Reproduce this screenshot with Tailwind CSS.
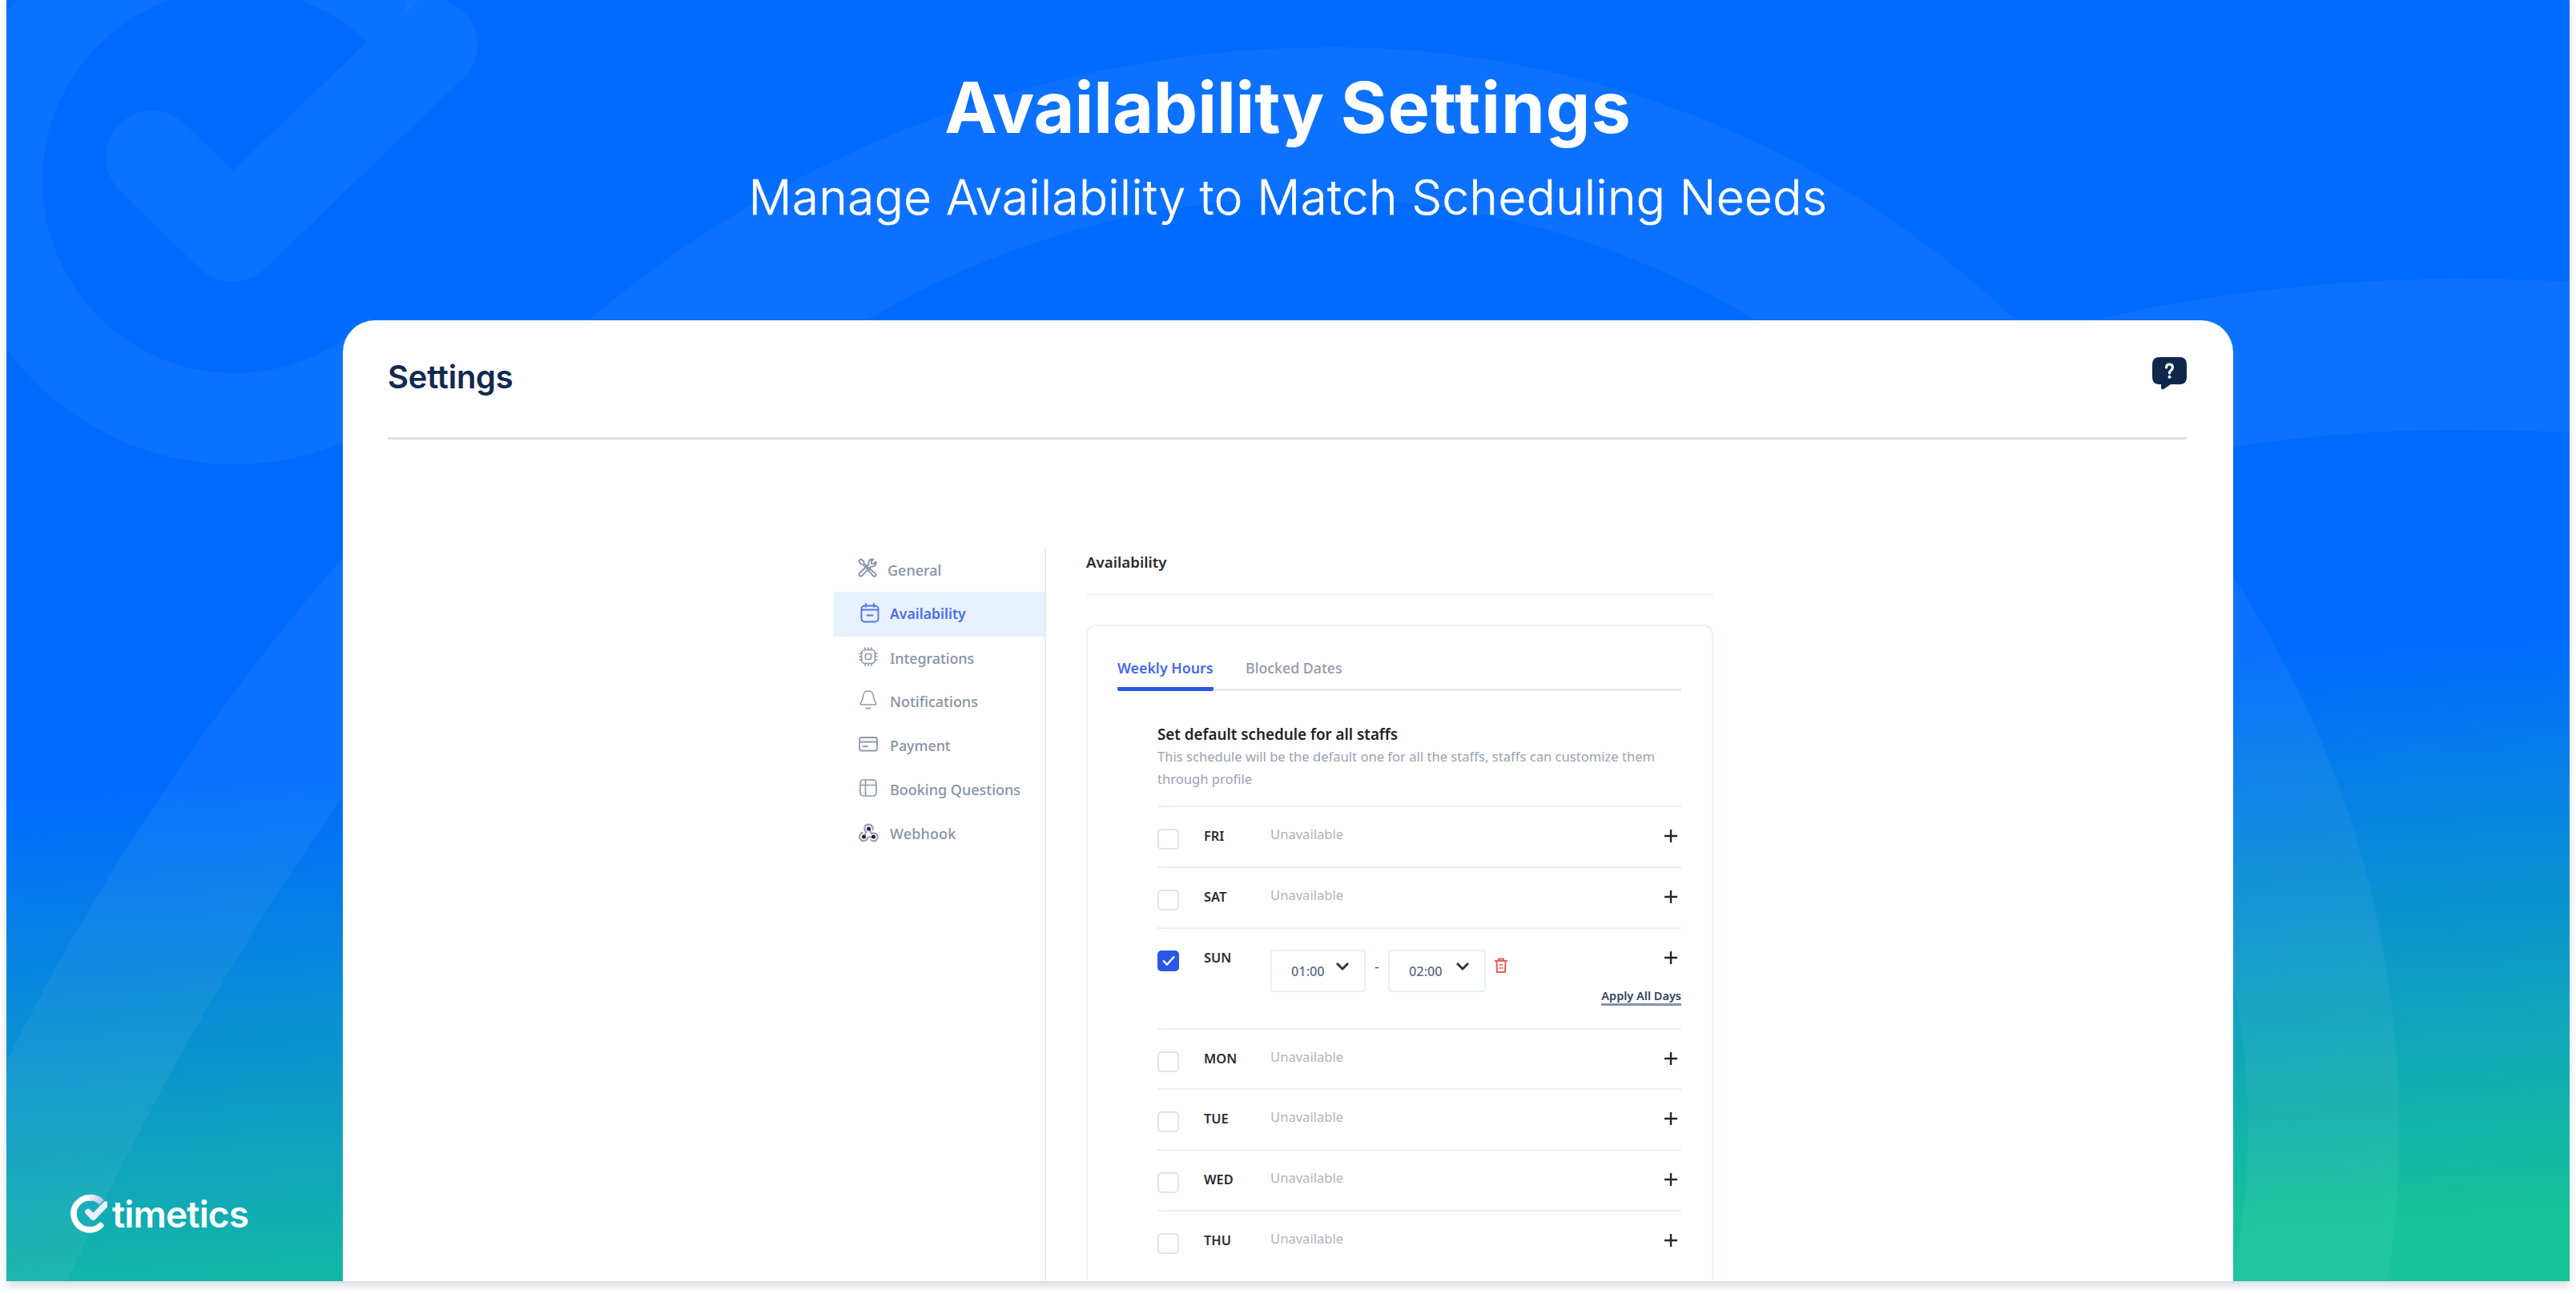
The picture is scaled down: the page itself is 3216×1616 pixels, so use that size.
<!DOCTYPE html>
<html lang="en">
<head>
    <meta charset="UTF-8">
    <meta name="viewport" content="width=device-width, initial-scale=1.0">
    <title>Timetics - Availability Settings</title>
    <script src="https://cdn.jsdelivr.net/npm/@tailwindcss/browser@4"></script>
</head>
<body class="bg-white h-[1616px] overflow-hidden">
    <main class="relative mx-2 w-[3200px] h-[1600px] bg-[linear-gradient(176.4deg,#006bff_55%,#17c398_95.5%)] shadow-[0_6px_10px_#d8dce3] font-['Inter',sans-serif]">

        <!-- Background shapes -->
        <svg class="absolute inset-0" width="3200" height="1600" viewBox="8 0 3200 1600" fill="none">
            <g opacity="0.045">
                <path d="M503 16A297 297 0 1 0 503 436" stroke="#fff" stroke-width="114" />
                <path d="M190 196L290 294L538 56" stroke="#fff" stroke-width="116" stroke-linecap="round" stroke-linejoin="round" />
            </g>
            <path d="M511 0H525L500 20Z" fill="#fff" fill-opacity="0.04" />
            <path d="M8 1326A3000 3000 0 0 1 428 696L735 400A1430 1430 0 0 1 1662 59A1242 1242 0 0 1 2517 400L2788 720A1250 1250 0 0 1 2981 1600L2786 1600A920 920 0 0 0 2788 1226L2193 400A1083 1083 0 0 0 1082 400L428 995A3600 3600 0 0 0 84 1600L8 1600Z" fill="#fff" fill-opacity="0.046" />
            <path d="M2610 400A2096 2096 0 0 1 3074 348Q3142 348 3208 352V540Q3140 537 3065 537A1870 1870 0 0 0 2788 558L2610 600Z" fill="#fff" fill-opacity="0.046" />
        </svg>

        <div class="relative flex flex-col h-full pt-[84px] overflow-hidden">
            <h1 class="text-center text-white font-bold text-[88px] leading-[100px] tracking-[-0.15px]">Availability <span class="tracking-[1px]">Settings</span></h1>
            <p class="mt-[22px] text-center text-white font-light text-[60px] leading-[80px] tracking-[0.48px] [-webkit-text-stroke:0.6px_white]">Manage Availability to Match Scheduling Needs</p>

            <!-- Settings card -->
            <div class="mt-[114px] ml-[420px] w-[2360px] h-[1200px] shrink-0 overflow-hidden rounded-t-[40px] bg-white">
                <div class="ml-14 mr-[58px] flex justify-between items-start h-[149px] pt-[46px] border-b-[3px] border-[#dfe0e2]">
                    <h2 class="text-[40px] leading-[49px] font-semibold tracking-[-0.25px] text-[#13294f]">Settings</h2>
                    <svg width="43" height="41" viewBox="0 0 43 41">
                        <path d="M9 0H34Q43 0 43 9V25Q43 34 34 34H23L14 40Q11 41 11 38V34H9Q0 34 0 25V9Q0 0 9 0Z" fill="#0e274b" />
                        <path d="M17.600 13Q17.600 9 21.400 9Q25.400 9 25.400 12.800Q25.400 15.200 23 16.800Q21.500 17.800 21.500 20" fill="none" stroke="#fff" stroke-width="3.200" stroke-linecap="round" />
                        <circle cx="21.500" cy="24.800" r="2" fill="#fff" />
                    </svg>
                </div>

                <div class="flex pt-[135px] pl-[613px] font-['Noto_Sans',sans-serif]">
                    <!-- Side menu -->
                    <nav class="w-[265px] h-[930px] border-r-2 border-[#e7e9ee] text-[18px] font-medium text-[#8793a4]">
                        <a class="flex items-center h-[55px] pl-[29px]">
                            <svg class="mb-[6px]" width="26" height="26" viewBox="0 0 24 24" fill="none" stroke="#8793a4" stroke-width="1.700" stroke-linecap="round" stroke-linejoin="round">
                                <path d="M2 4.200L4.200 2L7.600 4.200L8 6.800L13 11.800L11.600 13.200L6.600 8.200L4 7.600Z" />
                                <path d="M14.200 14.800L15.400 13.600L21.400 19.200Q22.400 20.400 21.200 21.500Q20 22.600 18.900 21.500L13.400 15.600" />
                                <path d="M18.800 2.200Q15.600 1.600 13.900 3.900Q12.700 5.600 13.500 8.100L2.700 18.400Q1.600 19.800 2.800 21.200Q4.200 22.400 5.600 21.300L16 10.600Q18.700 11.300 20.600 9.500Q22.500 7.500 21.700 5L19.100 7.500L16.700 7.200L16.300 4.800Z" />
                            </svg>
                            <span class="ml-[12px] mt-px">General</span>
                        </a>
                        <a class="flex items-center h-14 pl-[33px] bg-[#e8f1fe] text-[17.600px] font-semibold text-[#4a6cf0]">
                            <svg class="mb-1" width="24" height="25" viewBox="0 0 24 25" fill="none" stroke="#4f74f5" stroke-width="1.900" stroke-linecap="round">
                                <rect x="1.500" y="3.500" width="21" height="20" rx="4" />
                                <path d="M2 8.500H22M7 1V5M17 1V5M8.500 15.500H15.500" />
                            </svg>
                            <span class="ml-[13px] -mt-px">Availability</span>
                        </a>
                        <a class="flex items-center h-[54px] pl-[31px]">
                            <svg class="mb-1" width="24" height="24" viewBox="0 0 24 24" fill="none" stroke="#8f9aab" stroke-width="1.700" stroke-linecap="round">
                                <rect x="3.500" y="3.500" width="17" height="17" rx="4.500" />
                                <rect x="8.500" y="8.500" width="7" height="7" rx="1.500" />
                                <path d="M8 1V3.500M12 1V3.500M16 1V3.500M8 20.500V23M12 20.500V23M16 20.500V23M1 8H3.500M1 12H3.500M1 16H3.500M20.500 8H23M20.500 12H23M20.500 16H23" />
                            </svg>
                            <span class="ml-[15px] tracking-[-0.1px]">Integrations</span>
                        </a>
                        <a class="flex items-center h-[55px] pl-[31px]">
                            <svg class="mb-[6px]" width="24" height="24" viewBox="0 0 24 24" fill="none" stroke="#8f9aab" stroke-width="1.600" stroke-linecap="round" stroke-linejoin="round">
                                <path d="M12 1C7.500 1 5.600 4.500 5.500 8C5.400 12.500 2.600 14.500 2.300 16.600Q2.200 18 3.600 18H20.400Q21.800 18 21.700 16.600C21.400 14.500 18.600 12.500 18.500 8C18.400 4.500 16.500 1 12 1ZM9.500 22Q12 23.500 14.500 22" />
                            </svg>
                            <span class="ml-[15px] -mt-px">Notifications</span>
                        </a>
                        <a class="flex items-center h-[55px] pl-[31px]">
                            <svg class="mb-[6px]" width="24" height="24" viewBox="0 0 24 24" fill="none" stroke="#8f9aab" stroke-width="1.800" stroke-linecap="round">
                                <rect x="1" y="4" width="22" height="16.500" rx="2.500" />
                                <path d="M1.500 9.500H22.500M5.500 15H11" />
                            </svg>
                            <span class="ml-[15px] -mt-px tracking-[-0.1px]">Payment</span>
                        </a>
                        <a class="flex items-center h-[54px] pl-[31px]">
                            <svg class="mb-1" width="24" height="24" viewBox="0 0 24 24" fill="none" stroke="#8f9aab" stroke-width="1.700">
                                <rect x="2" y="2" width="20" height="20" rx="3.500" />
                                <path d="M2 8.500H22M8.500 2V22" />
                            </svg>
                            <span class="ml-[15px]">Booking Questions</span>
                        </a>
                        <a class="flex items-center h-[56px] pl-[31px]">
                            <svg class="mb-0.5" width="25" height="24" viewBox="0 0 25 24" fill="none" stroke="#98a2b3" stroke-width="2.200" stroke-linecap="round">
                                <path d="M17.500 8Q18 1.800 12.500 1.600Q7 1.800 7.300 7Q7.600 9.400 9.500 10.800L6.500 17" />
                                <path d="M4.500 11.800Q-.2 14.500 1.600 19.200Q4 23.500 8.600 21.700Q11 20.500 11.600 17.500H18" />
                                <path d="M12.500 7L16 13Q20 11.200 22.800 14.500Q24.800 18.500 21.800 21.500Q18.500 23.500 15.500 21.200" />
                                <g fill="#1f2430" stroke="none">
                                    <circle cx="12.500" cy="7" r="2.500" />
                                    <circle cx="6.500" cy="17" r="2.500" />
                                    <circle cx="18.500" cy="17" r="2.500" />
                                </g>
                            </svg>
                            <span class="ml-[14px] tracking-[0.15px]">Webhook</span>
                        </a>
                    </nav>

                    <!-- Availability panel -->
                    <section class="ml-[50px] w-[783px]">
                        <h3 class="text-[18.700px] leading-9 font-semibold text-[#2b2b2b]">Availability</h3>
                        <div class="mt-[21px] h-[3px] bg-[#f3f4f7]"></div>

                        <div class="mt-9 h-[900px] pl-[37px] pr-[38px] pt-9 border-2 border-[#edf3f9] rounded-xl">
                            <div class="flex h-[45px] gap-10 border-b-[3px] border-[#e8e9ec] text-[17.800px] leading-[33px]">
                                <div class="h-[45px] w-[120px] whitespace-nowrap border-b-[5px] border-[#2b57e2] rounded-[2px] font-semibold text-[#4468f2]">Weekly Hours</div>
                                <div class="font-medium text-[#8f9aa9]">Blocked Dates</div>
                            </div>

                            <div class="ml-[50px] mt-10">
                                <h4 class="text-[18.800px] leading-7 font-semibold text-[#222222]">Set default schedule for all staffs</h4>
                                <p class="text-[16.600px] leading-7 text-[#98a3b3]">This schedule will be the default one for all the staffs, staffs can customize them through profile</p>
                                <div id="days" class="mt-[19px] text-[16.600px] leading-6"></div>
                            </div>
                        </div>
                    </section>
                </div>
            </div>
        </div>

        <!-- Logo -->
        <div class="absolute left-[80px] top-[1490px] flex items-center h-[52px] text-white">
            <svg width="46" height="52" viewBox="0 0 46 52" fill="none">
                <defs>
                    <linearGradient id="ring" x1="20" y1="0" x2="40" y2="12" gradientUnits="userSpaceOnUse">
                        <stop stop-color="#fff" />
                        <stop offset="1" stop-color="#b9c3ea" />
                    </linearGradient>
                </defs>
                <path d="M35.500 40.500A20 20 0 1 1 23 5.800" transform="translate(2 0)" stroke="#fff" stroke-width="7.600" stroke-linecap="round" />
                <path d="M23 5.800Q32 4.500 39 11.500" stroke="url(#ring)" stroke-width="7.600" />
                <path d="M25 23.500L31.500 30L47 14" transform="translate(-3 0)" stroke="#e9efff" stroke-width="7.600" stroke-linecap="round" stroke-linejoin="round" />
            </svg>
            <span class="ml-[6px] text-[46px] leading-[52px] font-semibold tracking-[-0.9px]">timetics</span>
        </div>
    </main>

    <template id="plus">
        <svg width="16" height="16" viewBox="0 0 16 16" fill="none" stroke="#23272f" stroke-width="2.400"><path d="M8 0V16M0 8H16" /></svg>
    </template>

    <script>
        const plus = document.getElementById('plus').innerHTML;
        const unchecked = '<span class="mt-[27px] w-[27px] h-[26px] rounded-[5px] border-2 border-[#e4e4e6]"></span>';
        const checked = `<span class="mt-[27px] w-[27px] h-[26px] rounded-[5px] bg-[#2a58e4] flex items-center justify-center">
            <svg width="18" height="14" viewBox="0 0 18 14" fill="none" stroke="#fff" stroke-width="2.400"><path d="M2 6.500L7 11.500L16 1.500" /></svg></span>`;
        const chevron = '<svg class="mb-[10px]" width="16" height="10" viewBox="0 0 16 10" fill="none" stroke="#2a2f3a" stroke-width="2.800"><path d="M1 1L8 8L15 1" /></svg>';

        const select = (time, cls) => `<span class="${cls} mt-[26px] h-[53px] flex items-center justify-between pl-6 pr-[19px] rounded-[4px] border-2 border-[#e9f0f7] text-[16.300px] font-medium text-[#5c6b80]"><span class="mt-px">${time}</span>${chevron}</span>`;

        const slots = `
            ${select('01:00', 'w-[119px]')}
            <span class="mt-[35px] w-7 text-center text-[#3c4656]">-</span>
            ${select('02:00', 'w-[122px]')}
            <svg class="mt-[36px] ml-[11px]" width="16" height="19" viewBox="0 0 16 19" fill="none" stroke="#ec5f58" stroke-width="2">
                <path d="M0 4H16M5 3.500V1.500H11V3.500M2.500 4.500L3 18H13L13.500 4.500" />
                <path d="M5.500 9H10.500M5.500 13H10.500" stroke-width="1.500" />
            </svg>`;

        document.getElementById('days').innerHTML = ['FRI', 'SAT', 'SUN', 'MON', 'TUE', 'WED', 'THU'].map(day => {
            const open = day === 'SUN';
            return `
                <div class="flex items-start border-t-2 border-[#e9f0f6] ${open ? 'h-[126px]' : 'h-[75.800px]'}">
                    ${open ? checked : unchecked}
                    <span class="mt-[24px] ml-[31px] w-[83px] font-semibold text-[16.400px] text-[#2b2b2f]">${day}</span>
                    ${open ? slots : '<span class="mt-[22px] text-[#b0b4ba]">Unavailable</span>'}
                    <div class="ml-auto flex flex-col items-end">
                        <span class="block h-4 mt-[28px] mr-[5px]">${plus}</span>
                        ${open ? '<span class="mt-[29px] text-[14.500px] leading-[20px] font-semibold text-[#33445e] border-b-[3px] border-[#8594a9]">Apply All Days</span>' : ''}
                    </div>
                </div>`;
        }).join('');
    </script>
</body>
</html>
